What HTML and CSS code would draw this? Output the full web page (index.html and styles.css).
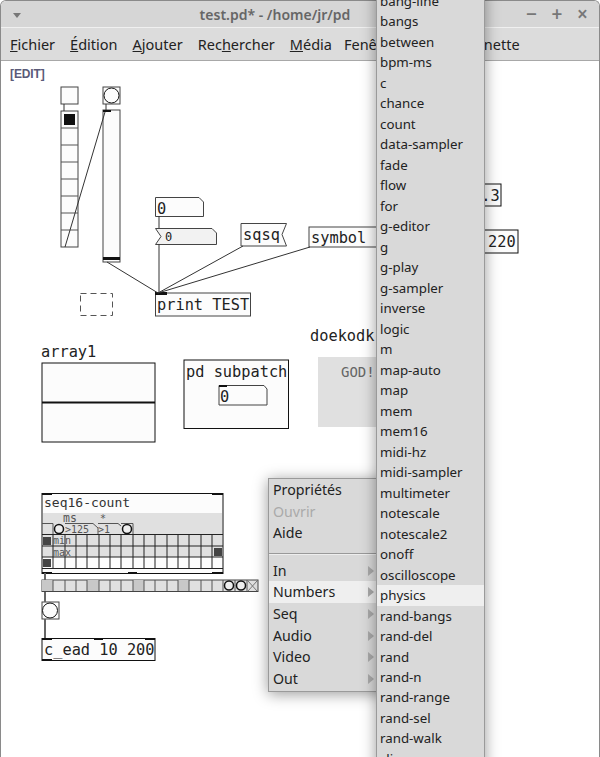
FILE: index.html
```html
<!DOCTYPE html>
<html lang="fr">
<head>
    <meta charset="UTF-8">
    <meta name="viewport" content="width=device-width, initial-scale=1.0">
    <title>test.pd</title>
    <link rel="stylesheet" href="styles.css">
</head>
<body>
    <div class="window">
        <header class="titlebar">
            <span class="win-menu"></span>
            <span class="win-title">test.pd* - /home/jr/pd</span>
            <div class="win-buttons">
                <span>&minus;</span>
                <span>+</span>
                <span>&times;</span>
            </div>
        </header>
        <nav class="menubar">
            <span><u>F</u>ichier</span>
            <span><u>É</u>dition</span>
            <span><u>A</u>jouter</span>
            <span>Rec<u>h</u>ercher</span>
            <span><u>M</u>édia</span>
            <span class="menu-cut">Fenê</span>
            <span class="menu-tail">nette</span>
        </nav>
        <main class="canvas">
            <div class="edit-tag">[EDIT]</div>
            <!-- viewBox uses window coordinates, the patch is a free canvas -->
            <svg class="patch" viewBox="0 61 600 696" width="600" height="696">
                <!-- bangs and radios -->
                <rect class="box" x="61" y="87" width="17" height="17"/>
                <rect class="box" x="61" y="111" width="17" height="136"/>
                <path class="line" d="M61 128H78M61 145H78M61 162H78M61 179H78M61 196H78M61 213H78M61 230H78"/>
                <rect class="solid" x="64" y="114" width="11" height="11"/>
                <rect class="box" x="103" y="87" width="17" height="17"/>
                <circle class="box dark" cx="111.5" cy="95.5" r="7.5"/>
                <rect class="box" x="103" y="110" width="17" height="152"/>
                <rect class="solid" x="103" y="257" width="17" height="3"/>
                <rect class="solid" x="103" y="110" width="8" height="2"/>

                <!-- atoms -->
                <path class="box" d="M155.5 197.5H199L203.5 202V216.5H155.5Z"/>
                <text class="mono" x="157" y="214">0</text>
                <path class="box grey" d="M155.5 228.5H212L216.5 233V244.5H155.5L161 236.5Z"/>
                <text class="mono small" x="165" y="241">0</text>
                <path class="box" d="M241 223.5H286.5L282 234.5L286.5 246H241Z"/>
                <text class="mono" x="243" y="240">sqsq</text>
                <rect class="box" x="309" y="227" width="100" height="20"/>
                <text class="mono" x="311" y="243">symbol</text>
                <rect class="box dark" x="450" y="184" width="51" height="22"/>
                <text class="mono" x="472" y="201">1.3</text>
                <rect class="box dark" x="440" y="230" width="78" height="23"/>
                <text class="mono" x="488" y="247">220</text>

                <rect class="box" x="155.5" y="293" width="95" height="23"/>
                <rect class="solid" x="155" y="292" width="12" height="3"/>
                <text class="mono" x="157" y="310">print TEST</text>
                <rect class="dashed" x="80.5" y="293.5" width="32" height="22"/>

                <!-- array and subpatch -->
                <text class="mono" x="41" y="357">array1</text>
                <rect class="box dark" x="42" y="363" width="113" height="79"/>
                <path class="line heavy" d="M42 402.5H155"/>
                <rect class="box dark" x="184" y="360" width="104.5" height="68.5"/>
                <text class="mono" x="186" y="377">pd subpatch</text>
                <path class="box" d="M219 385.5H264L267 389V405H219Z"/>
                <rect class="solid" x="219" y="385" width="8" height="2"/>
                <text class="mono" x="220" y="402">0</text>
                <text class="mono" x="310" y="341">doekodk</text>
                <rect class="cnv" x="318" y="357" width="90" height="70"/>
                <text class="mono god" x="341" y="377">GOD!</text>

                <!-- seq16-count abstraction -->
                <rect class="box dark" x="42" y="493.5" width="181" height="80"/>
                <text class="mono tiny" x="44" y="507">seq16-count</text>
                <rect class="cnv" x="43" y="513" width="179" height="21"/>
                <rect class="cnv" x="43" y="534" width="179" height="23"/>
                <path class="line strong" d="M42 534.5H223M42 546H223M42 557H223M42 568.5H223M53 534V569M65 534V569M76 534V569M87 534V569M99 534V569M110 534V569M121 534V569M133 534V569M144 534V569M155 534V569M167 534V569M178 534V569M189 534V569M201 534V569M212 534V569"/>
                <path class="line" d="M42 523.5H53V534M65 523.5H93L98 528V534M98 523.5H118L121 526M121 523.5H133V534"/>
                <circle class="ring" cx="59" cy="529" r="4.5"/>
                <circle class="ring" cx="127" cy="529" r="4.5"/>
                <text class="label big" x="63" y="522">ms</text>
                <text class="label" x="100" y="522">*</text>
                <text class="label" x="65" y="533">&gt;125</text>
                <text class="label" x="98" y="533">&gt;1</text>
                <text class="label" x="53" y="544">min</text>
                <text class="label" x="53" y="556">max</text>
                <rect class="knob" x="43" y="537" width="8" height="8"/>
                <rect class="knob" x="214" y="548" width="8" height="8"/>
                <rect class="knob" x="43" y="559" width="8" height="8"/>
                <path class="line heavy" d="M42 573H52M128 573H137M212 573H223M212 494H223M42 494H52"/>

                <!-- hradio row -->
                <rect class="cnv boxed" x="42" y="580" width="216" height="11.5"/>
                <rect class="mark" x="42" y="580" width="11" height="11"/>
                <rect class="mark" x="87" y="580" width="12" height="11"/>
                <rect class="mark" x="133" y="580" width="11" height="11"/>
                <rect class="mark" x="178" y="580" width="11" height="11"/>
                <path class="line" d="M53 580V591M65 580V591M76 580V591M87 580V591M99 580V591M110 580V591M121 580V591M133 580V591M144 580V591M155 580V591M167 580V591M178 580V591M189 580V591M201 580V591M212 580V591M223 580V591M235 580V591M247 580V591"/>
                <circle class="ring" cx="229" cy="585.5" r="4.5"/>
                <circle class="ring" cx="241" cy="585.5" r="4.5"/>
                <path class="line thin" d="M248 581L257 591M257 581L248 591"/>

                <rect class="box" x="42" y="602" width="17" height="17"/>
                <circle class="box dark" cx="50" cy="610.5" r="7.5"/>
                <rect class="box dark" x="42" y="638.5" width="113" height="22"/>
                <path class="heavy line" d="M42 639H52M94 639H103M145 639H155M42 660H52"/>
                <text class="mono" x="44" y="655">c_ead 10 200</text>

                <!-- wires lie over the objects -->
                <path class="wire" d="M64 104V111M106 104V110M105 112L65 247M159 216V228M159 244V293M107 262L158 293M243 246L158 293M310 247L158 293"/>
                <path class="wire thick" d="M45 573V580M45 592V602M45 619V638"/>
            </svg>
        </main>
    </div>

    <div class="popup popup-main">
        <div class="item">Propriétés</div>
        <div class="item disabled">Ouvrir</div>
        <div class="item">Aide</div>
        <div class="separator"></div>
        <div class="item sub">In</div>
        <div class="item sub active">Numbers</div>
        <div class="item sub">Seq</div>
        <div class="item sub">Audio</div>
        <div class="item sub">Video</div>
        <div class="item sub">Out</div>
    </div>

    <div class="popup popup-list">
        <div class="item">bang-line</div>
        <div class="item">bangs</div>
        <div class="item">between</div>
        <div class="item">bpm-ms</div>
        <div class="item">c</div>
        <div class="item">chance</div>
        <div class="item">count</div>
        <div class="item">data-sampler</div>
        <div class="item">fade</div>
        <div class="item">flow</div>
        <div class="item">for</div>
        <div class="item">g-editor</div>
        <div class="item">g</div>
        <div class="item">g-play</div>
        <div class="item">g-sampler</div>
        <div class="item">inverse</div>
        <div class="item">logic</div>
        <div class="item">m</div>
        <div class="item">map-auto</div>
        <div class="item">map</div>
        <div class="item">mem</div>
        <div class="item">mem16</div>
        <div class="item">midi-hz</div>
        <div class="item">midi-sampler</div>
        <div class="item">multimeter</div>
        <div class="item">notescale</div>
        <div class="item">notescale2</div>
        <div class="item">onoff</div>
        <div class="item">oscilloscope</div>
        <div class="item active">physics</div>
        <div class="item">rand-bangs</div>
        <div class="item">rand-del</div>
        <div class="item">rand</div>
        <div class="item">rand-n</div>
        <div class="item">rand-range</div>
        <div class="item">rand-sel</div>
        <div class="item">rand-walk</div>
        <div class="item">slicer</div>
    </div>
</body>
</html>
```

FILE: styles.css
```css
html, body {
    margin: 0;
    padding: 0;
    height: 757px;
    overflow: hidden;
    background-color: #fff;
    font-family: "Noto Sans", sans-serif;
    color: #222;
}
.window {
    display: flex;
    flex-direction: column;
    height: 757px;
    box-sizing: border-box;
    border: 1px solid #8a8a8a;
    border-bottom: none;
    border-radius: 6px 6px 0 0;
    overflow: hidden;
}
.titlebar {
    flex: none;
    display: flex;
    align-items: center;
    justify-content: center;
    position: relative;
    height: 26px;
    padding-right: 50px;
    background-color: #d6d6d6;
    border-bottom: 1px solid #f0f0f0;
}
.win-title {
    font-size: 14px;
    font-weight: 600;
    color: #666;
}
.win-menu {
    position: absolute;
    left: 12px;
    top: 12px;
    border-left: 4px solid transparent;
    border-right: 4px solid transparent;
    border-top: 5px solid #777;
}
.win-buttons {
    position: absolute;
    right: 8px;
    top: 0;
    display: flex;
    gap: 8.5px;
    font-size: 19px;
    font-weight: 600;
    line-height: 27px;
    color: #777;
}
.win-buttons span {
    width: 17px;
    text-align: center;
}
.menubar {
    flex: none;
    display: flex;
    align-items: center;
    gap: 15px;
    height: 32px;
    padding-left: 9px;
    background-color: #dcdcdc;
    border-bottom: 1px solid #a8a8a8;
    font-size: 14.5px;
}
.menu-cut {
    margin-left: -3px;
}
.menu-tail {
    margin-left: 92px;
}
.canvas {
    flex: 1;
    position: relative;
    background-color: #fff;
}
.edit-tag {
    position: absolute;
    left: 9px;
    top: 6px;
    font-family: "Liberation Sans", sans-serif;
    font-size: 12px;
    font-weight: 700;
    letter-spacing: -0.1px;
    color: #5a5a78;
}
.patch {
    position: absolute;
    left: -1px;
    top: 0;
}

/* patch objects */
.wire {
    fill: none;
    stroke: #333;
    stroke-width: 1;
}
.wire.thick {
    stroke: #666;
    stroke-width: 2;
}
.box {
    fill: #fcfcfc;
    stroke: #444;
    stroke-width: 1;
}
.box.grey {
    fill: #f2f2f2;
}
.box.dark {
    stroke: #111;
}
.ring {
    fill: #eee;
    stroke: #111;
    stroke-width: 1.5;
}
.line {
    fill: none;
    stroke: #555;
    stroke-width: 1;
}
.line.strong {
    stroke: #222;
}
.line.heavy {
    stroke: #111;
    stroke-width: 2;
}
.line.thin {
    stroke: #777;
}
.solid {
    fill: #111;
}
.dashed {
    fill: none;
    stroke: #555;
    stroke-dasharray: 6 4;
}
.cnv {
    fill: #e0e0e0;
}
.cnv.boxed {
    stroke: #444;
}
.mark {
    fill: #c8c8c8;
}
.knob {
    fill: #444;
}
.mono {
    font-family: "DejaVu Sans Mono", monospace;
    font-size: 15.3px;
    fill: #222;
}
.mono.small {
    font-size: 12px;
}
.mono.tiny {
    font-size: 13px;
    fill: #333;
}
.mono.god {
    font-size: 14px;
    fill: #666;
}
.label {
    font-family: "DejaVu Sans Mono", monospace;
    font-size: 10px;
    fill: #555;
}
.label.big {
    font-size: 11.5px;
}

/* context menus */
.popup {
    position: absolute;
    box-sizing: border-box;
    background-color: #d9d9d9;
    box-shadow: 0 2px 14px rgba(0, 0, 0, 0.4);
    border: 1px solid #9a9a9a;
    display: flex;
    flex-direction: column;
}
.popup-main {
    left: 268px;
    top: 478px;
    width: 120px;
    height: 214px;
    font-size: 14.2px;
}
.popup-main .item {
    height: 21.6px;
    line-height: 21.6px;
    padding-left: 4px;
}
.popup-list {
    left: 376px;
    top: -10px;
    width: 109px;
    height: 790px;
    font-size: 13.3px;
}
.popup-list .item {
    flex: none;
    height: 20.49px;
    line-height: 20.49px;
    padding-left: 3px;
}
.item.disabled {
    color: #aaa;
}
.item.active {
    background-color: #efefef;
}
.separator {
    height: 1px;
    margin: 9px 0 5px;
    background-color: #999;
    border-bottom: 1px solid #eee;
}
.sub {
    position: relative;
}
.sub::after {
    content: "";
    position: absolute;
    right: 13px;
    top: 6px;
    border-top: 5px solid transparent;
    border-bottom: 5px solid transparent;
    border-left: 6px solid #aaa;
}
```
